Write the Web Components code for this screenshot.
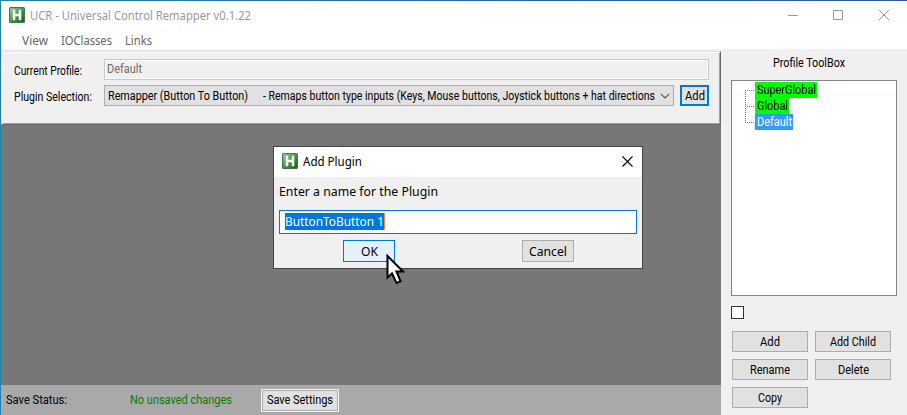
<!DOCTYPE html>
<html lang="en">
<head>
<meta charset="UTF-8">
<title>UCR - Universal Control Remapper</title>
<style>
    html, body {
        margin: 0;
        height: 100%;
        overflow: hidden;
    }

    body {
        font-family: Roboto, "Liberation Sans", sans-serif;
        font-size: 12px;
        color: #000;
    }
</style>
</head>
<body>
<ucr-app></ucr-app>

<script>
    // Single line of text condensed or widened to a given width
    class UiLabel extends HTMLElement {
        connectedCallback() {
            if (this.shadowRoot) return;
            this.attachShadow({ mode: 'open' });
            const width = Number(this.getAttribute('w'));
            this.shadowRoot.innerHTML = `
                <style>
                    :host {
                        display: block;
                        flex: none;
                        width: ${width}px;
                        height: 16px;
                        line-height: 16px;
                        white-space: nowrap;
                    }
                    span {
                        display: inline-block;
                        vertical-align: top;
                        transform-origin: 0 50%;
                    }
                </style>
                <span><slot></slot></span>
            `;
            const span = this.shadowRoot.querySelector('span');
            const natural = span.getBoundingClientRect().width;
            if (natural) span.style.transform = `scaleX(${width / natural})`;
        }
    }

    class UiButton extends HTMLElement {
        connectedCallback() {
            this.attachShadow({ mode: 'open' });
            this.shadowRoot.innerHTML = `
                <style>
                    :host {
                        display: flex;
                        flex: none;
                        box-sizing: border-box;
                        align-items: center;
                        justify-content: center;
                        width: 76px;
                        height: 21px;
                        border: 1px solid #adadad;
                        background: #e1e1e1;
                    }
                    :host([focused]) { border: 2px solid #0078d7; }
                    :host([hot]) { border-color: #0078d7; background: #e5f1fb; }
                </style>
                <slot></slot>
            `;
        }
    }

    class AppIcon extends HTMLElement {
        connectedCallback() {
            this.attachShadow({ mode: 'open' });
            this.shadowRoot.innerHTML = `
                <style>
                    :host { display: block; flex: none; width: 16px; height: 16px; }
                    svg { display: block; }
                </style>
                <svg width="16" height="16" viewBox="0 0 16 16">
                    <defs>
                        <linearGradient id="g" x1="0" y1="0" x2="1" y2="1">
                            <stop offset="0" stop-color="#9ccc9c"/>
                            <stop offset=".5" stop-color="#4a964b"/>
                            <stop offset="1" stop-color="#145a18"/>
                        </linearGradient>
                    </defs>
                    <rect width="16" height="16" rx="1.5" fill="#3c7c3f"/>
                    <rect x="1" y="1" width="14" height="14" rx="1" fill="url(#g)"/>
                    <path d="M4 3h2v4h4V3h2v10h-2V9H6v4H4z" fill="#f2f7ee" stroke="#f2f7ee" stroke-width=".6"/>
                </svg>
            `;
        }
    }

    class TitleBar extends HTMLElement {
        connectedCallback() {
            this.attachShadow({ mode: 'open' });
            this.shadowRoot.innerHTML = `
                <style>
                    :host {
                        display: flex;
                        align-items: center;
                        box-sizing: border-box;
                        height: 30px;
                        padding: 0 17px 0 8px;
                        background: #fff;
                        font-family: "Noto Sans", sans-serif;
                    }
                    app-icon { margin: 0 5px 2px 0; }
                    .controls { display: flex; margin-left: auto; }
                </style>
                <app-icon></app-icon>
                <slot></slot>
                <div class="controls"><slot name="controls"></slot></div>
            `;
        }
    }

    class MenuBar extends HTMLElement {
        connectedCallback() {
            this.attachShadow({ mode: 'open' });
            this.shadowRoot.innerHTML = `
                <style>
                    :host {
                        display: flex;
                        gap: 13px;
                        box-sizing: border-box;
                        height: 18px;
                        padding: 2px 0 0 21px;
                        background: #fff;
                        font-family: "Noto Sans", sans-serif;
                        color: #666;
                    }
                </style>
                <ui-label w="26">View</ui-label>
                <ui-label w="51">IOClasses</ui-label>
                <ui-label w="27">Links</ui-label>
            `;
        }
    }

    class ProfilePanel extends HTMLElement {
        connectedCallback() {
            this.attachShadow({ mode: 'open' });
            this.shadowRoot.innerHTML = `
                <style>
                    :host {
                        display: flex;
                        flex-direction: column;
                        flex: none;
                        gap: 5px;
                        box-sizing: border-box;
                        height: 74px;
                        padding: 7px 0 0 11px;
                        border: 1px solid #e3e3e3;
                        border-right-color: #696969;
                        border-bottom-color: #696969;
                        box-shadow: inset 1px 1px #fff, inset -1px -1px #a0a0a0;
                    }
                    .row { display: flex; align-items: flex-start; height: 21px; }
                    .name { width: 91px; flex: none; }
                    .name ui-label { margin: 4px 0 0 1px; }
                    .field {
                        box-sizing: border-box;
                        width: 605px;
                        height: 21px;
                        padding: 1px 0 0 2px;
                        border: 1px solid #c8c8c8;
                        box-shadow: inset 0 0 0 1px #fff;
                        color: #6d6d6d;
                    }
                    .combo {
                        display: flex;
                        align-items: center;
                        box-sizing: border-box;
                        width: 570px;
                        height: 21px;
                        margin-right: 6px;
                        padding: 1px 3px 0 3px;
                        border: 1px solid #adadad;
                        background: #e1e1e1;
                    }
                    .value { display: flex; gap: 15px; }
                    .combo svg { display: block; margin-left: auto; }
                    ui-button { width: 29px; }
                </style>
                <div class="row">
                    <div class="name"><ui-label w="68">Current Profile:</ui-label></div>
                    <div class="field"><ui-label w="35">Default</ui-label></div>
                </div>
                <div class="row">
                    <div class="name"><ui-label w="78">Plugin Selection:</ui-label></div>
                    <div class="combo">
                        <div class="value">
                            <ui-label w="140">Remapper (Button To Button)</ui-label>
                            <ui-label w="392">- Remaps button type inputs (Keys, Mouse buttons, Joystick buttons + hat directions</ui-label>
                        </div>
                        <svg width="10" height="6" viewBox="0 0 10 6"><path d="M.8.8 5 5 9.2.8" fill="none" stroke="#555" stroke-width="1.2"/></svg>
                    </div>
                    <ui-button focused><ui-label w="20">Add</ui-label></ui-button>
                </div>
            `;
        }
    }

    class StatusBar extends HTMLElement {
        connectedCallback() {
            this.attachShadow({ mode: 'open' });
            this.shadowRoot.innerHTML = `
                <style>
                    :host {
                        display: flex;
                        align-items: center;
                        flex: none;
                        box-sizing: border-box;
                        height: 30px;
                        padding-left: 5px;
                        background: #a9a9a9;
                    }
                    .state { margin: 0 29px 0 63px; color: #008000; }
                    ui-button { width: 76px; height: 21px; outline: 1px solid #f4f4f4; margin-left: 1px; }
                </style>
                <ui-label w="61">Save Status:</ui-label>
                <ui-label class="state" w="102">No unsaved changes</ui-label>
                <ui-button><ui-label w="66">Save Settings</ui-label></ui-button>
            `;
        }
    }

    class TreeItem extends HTMLElement {
        connectedCallback() {
            this.attachShadow({ mode: 'open' });
            this.shadowRoot.innerHTML = `
                <style>
                    :host { display: flex; height: 16px; }
                    .text { padding: 0 1px 0 2px; background: #0f0; }
                    :host([selected]) .text { background: #3399ff; color: #fff; }
                    svg { display: block; flex: none; }
                </style>
                <svg width="10" height="16" fill="none" stroke="#777" stroke-dasharray="1 1">
                    <path d="M.5 ${this.hasAttribute('first') ? 8 : 0}V${this.hasAttribute('selected') ? 8 : 16}M0 8.5H9"/>
                </svg>
                <div class="text"><slot></slot></div>
            `;
        }
    }

    class ProfileToolbox extends HTMLElement {
        connectedCallback() {
            this.attachShadow({ mode: 'open' });
            this.shadowRoot.innerHTML = `
                <style>
                    :host {
                        display: flex;
                        flex-direction: column;
                        flex: none;
                        box-sizing: border-box;
                        width: 186px;
                        padding: 6px 10px 0;
                    }
                    .title { margin: 0 0 9px 42px; }
                    .tree {
                        box-sizing: border-box;
                        width: 166px;
                        height: 216px;
                        padding: 1px 0 0 13px;
                        border: 1px solid #828790;
                        background: #fff;
                    }
                    .check {
                        box-sizing: border-box;
                        width: 13px;
                        height: 13px;
                        margin: 10px 0 12px;
                        border: 1px solid #333;
                        background: #fff;
                    }
                    .buttons {
                        display: grid;
                        grid-template-columns: 76px 76px;
                        gap: 7px;
                        padding-left: 1px;
                    }
                </style>
                <ui-label class="title" w="72">Profile ToolBox</ui-label>
                <div class="tree">
                    <tree-item first><ui-label w="59">SuperGlobal</ui-label></tree-item>
                    <tree-item><ui-label w="31">Global</ui-label></tree-item>
                    <tree-item selected><ui-label w="35">Default</ui-label></tree-item>
                </div>
                <div class="check"></div>
                <div class="buttons">
                    <ui-button><ui-label w="20">Add</ui-label></ui-button>
                    <ui-button><ui-label w="46">Add Child</ui-label></ui-button>
                    <ui-button><ui-label w="40">Rename</ui-label></ui-button>
                    <ui-button><ui-label w="31">Delete</ui-label></ui-button>
                    <ui-button><ui-label w="24">Copy</ui-label></ui-button>
                </div>
            `;
        }
    }

    class AddPluginDialog extends HTMLElement {
        connectedCallback() {
            this.attachShadow({ mode: 'open' });
            this.shadowRoot.innerHTML = `
                <style>
                    :host {
                        display: block;
                        box-sizing: border-box;
                        width: 370px;
                        height: 123px;
                        border: 1px solid #444;
                        background: #f0f0f0;
                        font-family: "Noto Sans", sans-serif;
                        font-size: 12.5px;
                    }
                    title-bar { padding-right: 9px; }
                    .body { padding: 7px 5px 0; }
                    .input {
                        display: flex;
                        box-sizing: border-box;
                        height: 24px;
                        margin-top: 10px;
                        padding: 2px 5px;
                        border: 1px solid #0078d7;
                        background: #fff;
                    }
                    .selection {
                        box-sizing: border-box;
                        height: 17px;
                        padding-top: 1px;
                        border-right: 1px solid #ff8728;
                        background: #0078d7;
                        color: #fff;
                    }
                    .actions { display: flex; gap: 127px; margin: 6px 0 0 64px; }
                    .actions ui-button { width: 52px; height: 22px; padding-top: 2px; }
                    svg { display: block; }
                </style>
                <title-bar>
                    <ui-label w="59">Add Plugin</ui-label>
                    <svg slot="controls" width="11" height="12" stroke="#000" stroke-width="1.1"><path d="m.5.5 10 10m0-10-10 10"/></svg>
                </title-bar>
                <div class="body">
                    <ui-label w="159">Enter a name for the Plugin</ui-label>
                    <div class="input"><div class="selection"><ui-label w="99">ButtonToButton 1</ui-label></div></div>
                    <div class="actions">
                        <ui-button hot><ui-label w="17">OK</ui-label></ui-button>
                        <ui-button><ui-label w="38">Cancel</ui-label></ui-button>
                    </div>
                </div>
            `;
        }
    }

    class UcrApp extends HTMLElement {
        connectedCallback() {
            this.attachShadow({ mode: 'open' });
            this.shadowRoot.innerHTML = `
                <style>
                    :host {
                        display: flex;
                        flex-direction: column;
                        position: relative;
                        box-sizing: border-box;
                        width: 907px;
                        height: 415px;
                        overflow: hidden;
                        border-left: 1px solid #2380a8;
                        background: #f0f0f0;
                    }
                    .edge { flex: none; height: 1px; background: linear-gradient(90deg, #2380a8, #2b579a); }
                    .main { display: flex; flex: 1; }
                    .left { display: flex; flex-direction: column; width: 720px; padding-top: 2px; }
                    .canvas { flex: 1; background: #777; }
                    .bar { color: #999; }
                    .controls { display: block; }
                    add-plugin-dialog { position: absolute; left: 272px; top: 146px; }
                    .cursor { position: absolute; left: 385px; top: 253px; }
                </style>
                <div class="edge"></div>
                <title-bar class="bar">
                    <ui-label w="221">UCR - Universal Control Remapper v0.1.22</ui-label>
                    <svg slot="controls" class="controls" width="102" height="14" fill="none" stroke="#999">
                        <path d="M0 6.5h10M45.500 1.500h9v9h-9zM91 1l10 10M101 1 91 11"/>
                    </svg>
                </title-bar>
                <menu-bar></menu-bar>
                <div class="main">
                    <div class="left">
                        <profile-panel></profile-panel>
                        <div class="canvas"></div>
                        <status-bar></status-bar>
                    </div>
                    <profile-toolbox></profile-toolbox>
                </div>
                <add-plugin-dialog></add-plugin-dialog>
                <svg class="cursor" width="19" height="33" viewBox="0 0 19 33">
                    <path d="M1.500 3v21.500l4.500-4 4.500 9.500 4-1.800L10.500 18.500H17z" fill="#fff" stroke="#000" stroke-width="2"/>
                </svg>
            `;
        }
    }

    customElements.define('ucr-app', UcrApp);
    customElements.define('title-bar', TitleBar);
    customElements.define('menu-bar', MenuBar);
    customElements.define('profile-panel', ProfilePanel);
    customElements.define('status-bar', StatusBar);
    customElements.define('profile-toolbox', ProfileToolbox);
    customElements.define('tree-item', TreeItem);
    customElements.define('add-plugin-dialog', AddPluginDialog);
    customElements.define('app-icon', AppIcon);
    customElements.define('ui-button', UiButton);
    customElements.define('ui-label', UiLabel);
</script>
</body>
</html>
